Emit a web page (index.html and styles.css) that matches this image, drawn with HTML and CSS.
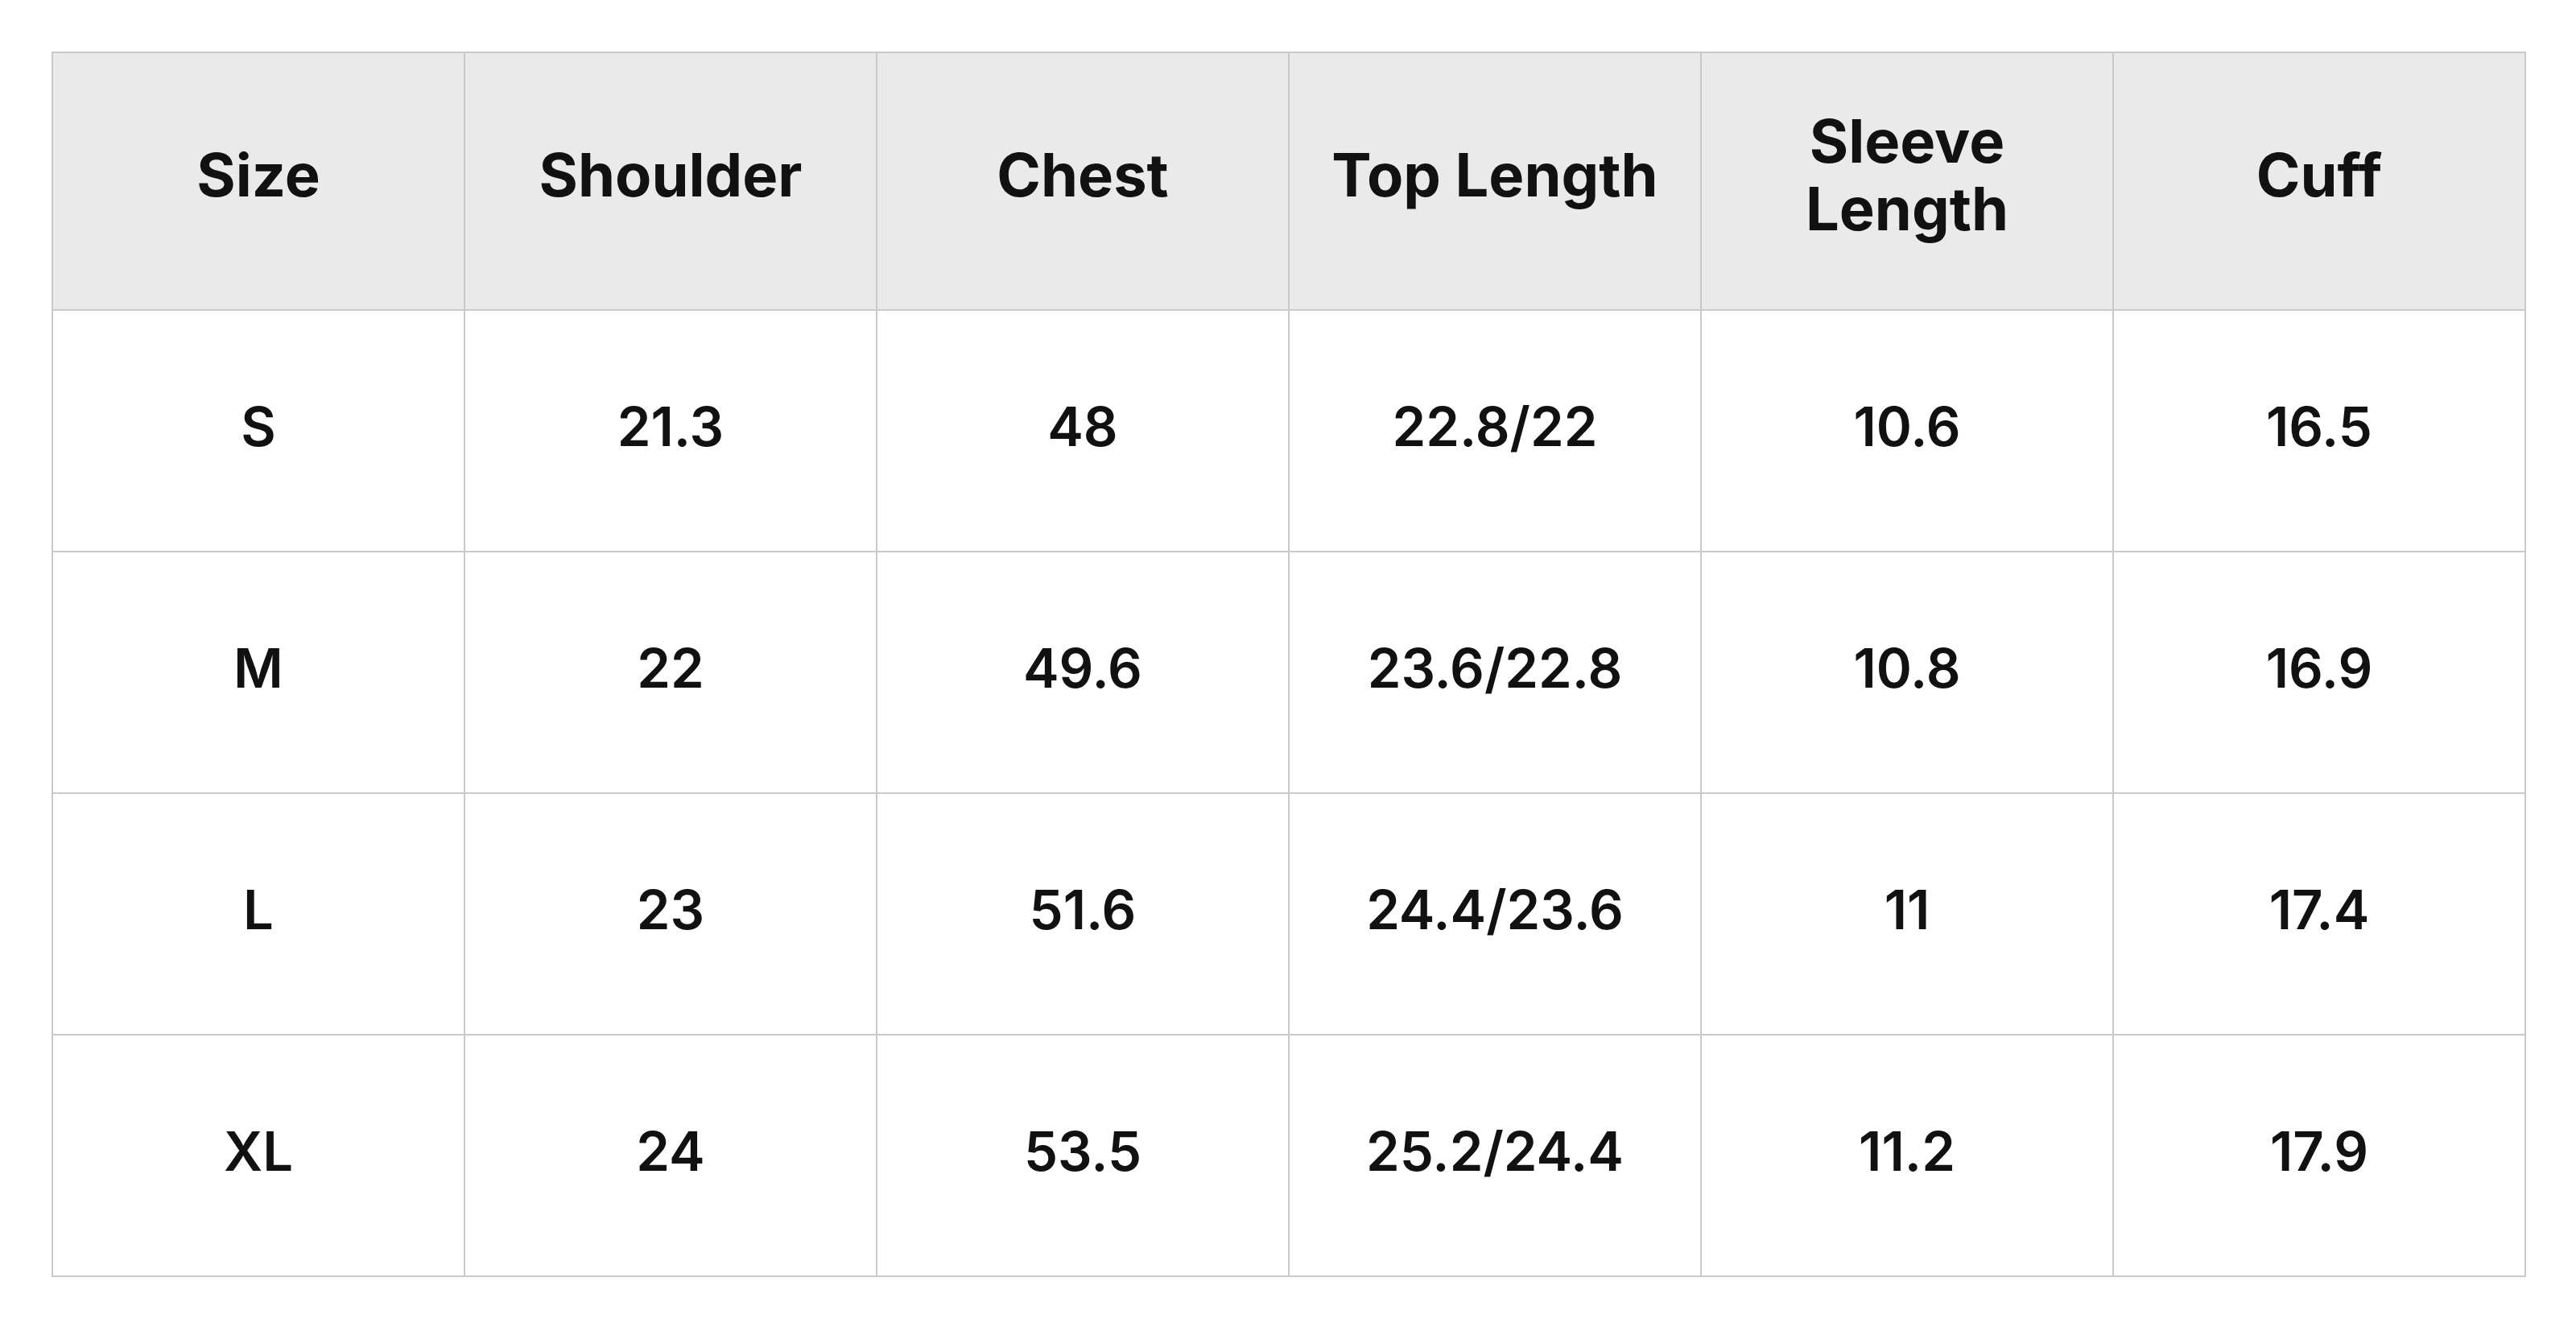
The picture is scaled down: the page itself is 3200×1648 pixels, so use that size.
FILE: index.html
```html
<!DOCTYPE html>
<html lang="en">
<head>
<meta charset="utf-8">
<title>Size Chart</title>
<link rel="stylesheet" href="styles.css">
</head>
<body>
<main class="page">
  <table class="size-table">
    <thead>
      <tr class="head-row">
        <th>Size</th>
        <th>Shoulder</th>
        <th>Chest</th>
        <th>Top Length</th>
        <th>Sleeve<br>Length</th>
        <th>Cuff</th>
      </tr>
    </thead>
    <tbody>
      <tr><td>S</td><td>21.3</td><td>48</td><td>22.8/22</td><td>10.6</td><td>16.5</td></tr>
      <tr><td>M</td><td>22</td><td>49.6</td><td>23.6/22.8</td><td>10.8</td><td>16.9</td></tr>
      <tr><td>L</td><td>23</td><td>51.6</td><td>24.4/23.6</td><td>11</td><td>17.4</td></tr>
      <tr><td>XL</td><td>24</td><td>53.5</td><td>25.2/24.4</td><td>11.2</td><td>17.9</td></tr>
    </tbody>
  </table>
</main>
</body>
</html>
```
FILE: styles.css
```css
html, body {
  margin: 0;
  padding: 0;
  background: #ffffff;
}
.page {
  padding: 64px;
}
.size-table {
  border-collapse: collapse;
  table-layout: fixed;
  width: 3074px;
  font-family: Inter, "Noto Sans", sans-serif;
  color: #111111;
}
.size-table th,
.size-table td {
  border: 2px solid #c9c9c9;
  text-align: center;
  vertical-align: middle;
  padding: 0;
  width: 510px;
}
.head-row th {
  background: #eaeaea;
  height: 302px;
  padding-bottom: 16px;
  font-size: 74px;
  font-weight: 700;
  line-height: 84px;
}
.size-table td {
  height: 286px;
  padding-bottom: 12px;
  font-size: 67px;
  font-weight: 600;
}
```
